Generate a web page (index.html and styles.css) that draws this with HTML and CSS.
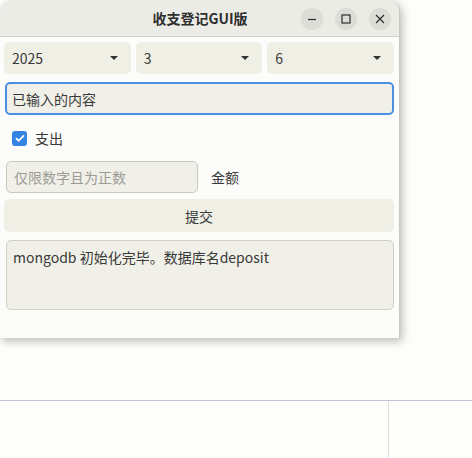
FILE: index.html
```html
<!DOCTYPE html>
<html lang="zh">
<head>
<meta charset="utf-8">
<link rel="stylesheet" href="styles.css">
</head>
<body>
<div class="window">
  <div class="titlebar">
    <div class="title">收支登记GUI版</div>
    <div class="controls">
      <span class="ctl"><svg width="10" height="10" viewBox="0 0 10 10"><path d="M1 5.5h8" stroke="#2e2e2e" stroke-width="1.2"/></svg></span>
      <span class="ctl"><svg width="10" height="10" viewBox="0 0 10 10"><rect x="1" y="1" width="8" height="8" fill="none" stroke="#2e2e2e" stroke-width="1.2"/></svg></span>
      <span class="ctl"><svg width="10" height="10" viewBox="0 0 10 10"><path d="M1 1l8 8M9 1l-8 8" stroke="#2e2e2e" stroke-width="1.2"/></svg></span>
    </div>
  </div>
  <div class="content">
    <div class="combos">
      <div class="combo"><span>2025</span><i class="arrow"></i></div>
      <div class="combo"><span>3</span><i class="arrow"></i></div>
      <div class="combo"><span>6</span><i class="arrow"></i></div>
    </div>
    <div class="entry focused">已输入的内容</div>
    <label class="check">
      <span class="box"><svg width="14" height="14" viewBox="0 0 14 14"><path d="M3 7.2l2.6 2.6L11 4.3" fill="none" stroke="#fff" stroke-width="1.8"/></svg></span>
      <span>支出</span>
    </label>
    <div class="amount">
      <div class="entry small placeholder">仅限数字且为正数</div>
      <span class="lbl">金额</span>
    </div>
    <div class="button">提交</div>
    <div class="textview">mongodb 初始化完毕。数据库名deposit</div>
  </div>
</div>
<div class="panel">
  <div class="cell"></div>
  <div class="cell right"></div>
</div>
</body>
</html>
```

FILE: styles.css
```css
* { box-sizing: border-box; }
html, body { margin: 0; padding: 0; }
body {
  width: 472px;
  height: 458px;
  overflow: hidden;
  background: #fdfdf9;
  font-family: "Noto Sans CJK SC", "Noto Sans", sans-serif;
  font-size: 14px;
  color: #3a3a3a;
}
.window {
  width: 400px;
  height: 338px;
  background: #fcfcfa;
  border-radius: 12px 12px 0 0;
  box-shadow: 2px 3px 10px rgba(0,0,0,0.28);
  border-right: 1px solid #c8c8c0;
  display: flex;
  flex-direction: column;
}
.titlebar {
  height: 37px;
  flex: none;
  background: #ececE6;
  border-radius: 12px 12px 0 0;
  border-bottom: 1px solid #d2d2ca;
  position: relative;
  display: flex;
  align-items: center;
  justify-content: center;
}
.title {
  font-weight: bold;
  font-size: 14px;
  color: #2e2e2e;
  margin-left: 1px;
}
.controls {
  position: absolute;
  right: 8px;
  top: 8px;
  display: flex;
  gap: 12px;
}
.ctl {
  width: 22px;
  height: 22px;
  border-radius: 50%;
  background: #dddcd6;
  display: flex;
  align-items: center;
  justify-content: center;
}
.content {
  padding: 5px 5px 0 4px;
  display: flex;
  flex-direction: column;
}
.combos {
  display: grid;
  grid-template-columns: repeat(3, 1fr);
  gap: 5px;
  height: 32px;
}
.combo {
  background: #efefe6;
  border-radius: 5px;
  display: flex;
  align-items: center;
  justify-content: space-between;
  padding: 0 13px 0 8px;
}
.arrow {
  width: 0;
  height: 0;
  border-left: 4px solid transparent;
  border-right: 4px solid transparent;
  border-top: 4px solid #333;
}
.entry {
  height: 33px;
  margin-top: 8px;
  margin-left: 1px;
  background: #f0f0e8;
  border: 1px solid #c9c9c0;
  border-radius: 5px;
  display: flex;
  align-items: center;
  padding-left: 7px;
}
.entry.focused {
  border: 2px solid #4b8fe2;
  padding-left: 5px;
}
.check {
  display: flex;
  align-items: center;
  gap: 8px;
  height: 46px;
  padding-left: 8px;
}
.box {
  width: 15px;
  height: 15px;
  background: #3584e4;
  border-radius: 3px;
  display: flex;
  align-items: center;
  justify-content: center;
}
.amount {
  display: flex;
  align-items: center;
  gap: 12px;
}
.entry.small {
  width: 192px;
  height: 32px;
  margin: 0 0 0 2px;
}
.placeholder { color: #9c9c96; }
.lbl { margin-left: 1px; }
.button {
  height: 33px;
  margin-top: 6px;
  background: #efefe6;
  border-radius: 5px;
  display: flex;
  align-items: center;
  justify-content: center;
}
.textview {
  margin-top: 8px;
  margin-left: 2px;
  height: 70px;
  background: #f0f0e8;
  border: 1px solid #cfcfc6;
  border-radius: 5px;
  padding: 6px 6px;
  line-height: 20px;
}
.panel {
  margin-top: 62px;
  height: 58px;
  border-top: 1px solid #c3c3d3;
  display: grid;
  grid-template-columns: 388px 1fr;
}
.cell.right { border-left: 1px solid #dcdce6; }
```
